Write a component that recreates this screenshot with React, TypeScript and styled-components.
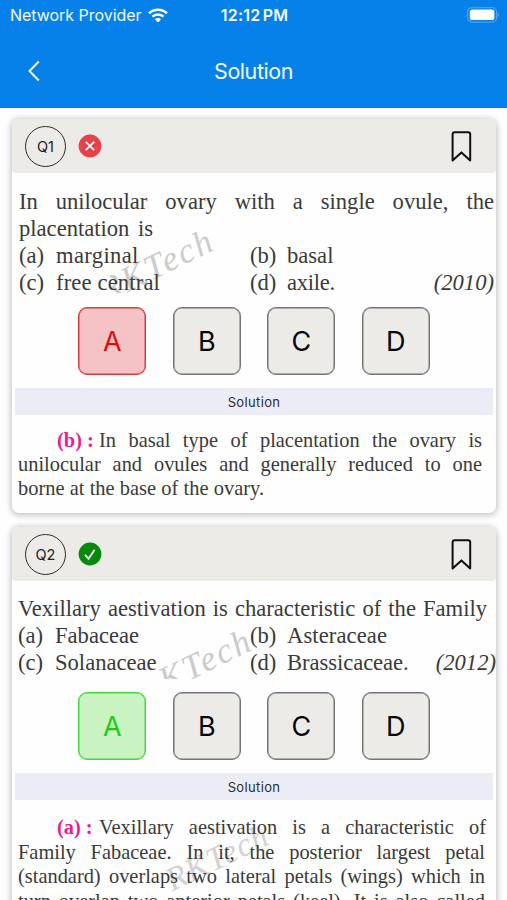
import React from "react";
import styled, { createGlobalStyle } from "styled-components";

const Global = createGlobalStyle`
  * { box-sizing: border-box; }
  html, body { margin: 0; padding: 0; height: 900px; overflow: hidden; background: #fff; }
  body { font-family: Inter, "Liberation Sans", sans-serif; }
  button { font: inherit; padding: 0; background: none; border: 0; }
`;

const Screen = styled.main`
  width: 507px;
  height: 900px;
  overflow: hidden;
  background: #fefefe;
`;

const TopBar = styled.header`
  height: 108px;
  background: #0581e9;
  color: #f2f9ff;
`;

const StatusBar = styled.div`
  height: 30px;
  padding: 0 8px 0 10px;
  display: grid;
  grid-template-columns: 1fr auto 1fr;
  align-items: center;
`;

const Carrier = styled.div`
  display: flex;
  align-items: center;
  gap: 6px;
  font-size: 16px;
  letter-spacing: -0.03px;
`;

const Clock = styled.div`
  font-size: 16px;
  font-weight: 600;
  letter-spacing: 0.2px;
  word-spacing: -2px;
`;

const Battery = styled.svg`
  justify-self: end;
`;

const NavBar = styled.nav`
  height: 78px;
  padding: 4px 24px 0 24px;
  display: grid;
  grid-template-columns: 20px 1fr 20px;
  align-items: center;
`;

const Title = styled.h1`
  margin: 0;
  text-align: center;
  font-size: 21.5px;
  font-weight: 400;
  line-height: 26px;
  letter-spacing: -0.45px;
`;

const BackButton = styled.button`
  display: flex;
  color: inherit;
`;

const CardList = styled.div`
  padding: 11px 11px 0 12px;
  display: flex;
  flex-direction: column;
  gap: 14px;
`;

const Card = styled.article<{ $height: number }>`
  flex: none;
  height: ${(p) => p.$height}px;
  border-radius: 7px;
  background: #fefefe;
  box-shadow: 0 1px 6px 1px rgba(0, 0, 0, 0.25);
`;

const CardHeader = styled.div`
  height: 54px;
  padding: 0 24px 0 13px;
  display: flex;
  align-items: center;
  border-radius: 7px 7px 4px 4px;
  background: #ecebe8;
`;

const QuestionNumber = styled.div`
  width: 41px;
  height: 41px;
  margin-right: 12px;
  display: flex;
  align-items: center;
  justify-content: center;
  border: 1.5px solid #2c2c2c;
  border-radius: 50%;
  font-size: 14.5px;
  color: #222;
`;

const BookmarkButton = styled.button`
  display: flex;
  margin-left: auto;
`;

const Prose = styled.div<{ $size: number; $leading: number; $pad: string }>`
  position: relative;
  padding: ${(p) => p.$pad};
  font-family: "Liberation Serif", serif;
  font-size: ${(p) => p.$size}px;
  line-height: ${(p) => p.$leading}px;
  color: #3a3a3a;
`;

const Line = styled.div<{ $width: number }>`
  position: relative;
  width: ${(p) => p.$width}px;
  white-space: nowrap;
  text-align: justify;
  text-align-last: justify;
`;

const AnswerLine = styled.div`
  position: relative;
  display: flex;
  padding-left: 39px;
`;

const Key = styled.b`
  width: 42px;
  flex: none;
  color: #ea1c96;
`;

const Choices = styled.div<{ $second: number }>`
  position: relative;
  display: grid;
  grid-template-columns: 37px ${(p) => p.$second}px 37px 1fr auto;
  white-space: nowrap;
`;

const Choice = styled.span<{ $spacing?: number }>`
  letter-spacing: ${(p) => p.$spacing ?? 0}px;
`;

const Year = styled.i`
  grid-column: 5;
`;

const WatermarkClip = styled.div<{ $x: number; $y: number; $w: number; $h: number }>`
  position: absolute;
  left: ${(p) => p.$x}px;
  top: ${(p) => p.$y}px;
  width: ${(p) => p.$w}px;
  height: ${(p) => p.$h}px;
  overflow: hidden;
`;

const WatermarkText = styled.span<{ $x: number; $y: number; $small?: boolean }>`
  position: absolute;
  left: ${(p) => p.$x}px;
  top: ${(p) => p.$y}px;
  transform: rotate(-26deg);
  transform-origin: 0 100%;
  font-size: ${(p) => (p.$small ? 33 : 35)}px;
  line-height: 1;
  font-style: italic;
  letter-spacing: ${(p) => (p.$small ? 1.2 : 2.3)}px;
  color: ${(p) => (p.$small ? "#d2d2d2" : "#cbcbcb")};
`;

const Options = styled.div<{ $top: number }>`
  margin-top: ${(p) => p.$top}px;
  display: flex;
  justify-content: center;
  gap: 26.5px;
`;

const tones = {
  plain: { bg: "#ecebe8", line: "#747474", text: "#060606" },
  wrong: { bg: "#f5c3c3", line: "#dc3b40", text: "#d90f12" },
  right: { bg: "#c9f4c1", line: "#4ad545", text: "#20ca17" },
};

type Tone = keyof typeof tones;

const Option = styled.button<{ $tone: Tone }>`
  width: 68px;
  height: 68px;
  padding-top: 2px;
  border: 1.5px solid ${(p) => tones[p.$tone].line};
  box-shadow: inset 0 0 0 0.5px ${(p) => tones[p.$tone].line};
  border-radius: 9px;
  background: ${(p) => tones[p.$tone].bg};
  color: ${(p) => tones[p.$tone].text};
  font-size: 27px;
  line-height: 64px;
`;

const SolutionBar = styled.div`
  height: 27px;
  margin: 13px 3px 0;
  background: #ebecf5;
  color: #2c2c30;
  font-size: 13px;
  line-height: 29px;
  letter-spacing: 0.35px;
  text-align: center;
`;

function WifiIcon() {
  return (
    <svg width="20" height="15" viewBox="0 0 20 15" fill="none" stroke="#fff">
      <path d="M1.1 5.2C6 0.6 14 0.6 18.9 5.2" strokeWidth="2.7" />
      <path d="M4.4 8.7C7.5 5.8 12.5 5.8 15.6 8.7" strokeWidth="2.5" />
      <path d="M10 14.4L6.9 11.3Q10 8.6 13.1 11.3Z" fill="#fff" stroke="none" />
    </svg>
  );
}

function BatteryIcon() {
  return (
    <Battery width="33" height="17" viewBox="0 0 33 17">
      <rect x="1.6" y="0.6" width="29" height="14.5" rx="4.5" fill="none" stroke="#4ba3f0" strokeWidth="1.2" />
      <rect x="3.8" y="2.5" width="24.6" height="10.6" rx="2.6" fill="#fff" />
      <path d="M31.6 5.4Q33 6 33 7.8T31.6 10.2Z" fill="#4ba3f0" />
    </Battery>
  );
}

function ResultIcon({ correct }: { correct: boolean }) {
  return (
    <svg width="24" height="24" viewBox="0 0 24 24" fill="none" stroke="#fff" strokeWidth="1.8">
      <circle cx="12" cy="12" r="11.4" fill={correct ? "#078a0b" : "#e5424b"} stroke="none" />
      {correct ? <path d="M7 12.8L10.6 16.8L16.6 7.8" /> : <path d="M7.8 7.8L16.2 16.2M16.2 7.8L7.8 16.2" />}
    </svg>
  );
}

function BookmarkIcon() {
  return (
    <svg width="21" height="32" viewBox="0 0 21 32" fill="none" stroke="#101010" strokeWidth="2">
      <path d="M1.6 30.6V4.3Q1.6 2.2 3.7 2.2H17.1Q19.2 2.2 19.2 4.3V30.6L10.4 22.4Z" strokeLinejoin="round" />
    </svg>
  );
}

interface QuestionProps {
  label: string;
  correct: boolean;
  height: number;
  optionsTop: number;
  question: React.ReactNode;
  solution: React.ReactNode;
}

function Question({ label, correct, height, optionsTop, question, solution }: QuestionProps) {
  return (
    <Card $height={height}>
      <CardHeader>
        <QuestionNumber>{label}</QuestionNumber>
        <ResultIcon correct={correct} />
        <BookmarkButton aria-label="Bookmark"><BookmarkIcon /></BookmarkButton>
      </CardHeader>
      {question}
      <Options $top={optionsTop}>
        {["A", "B", "C", "D"].map((letter, i) => (
          <Option key={letter} $tone={i > 0 ? "plain" : correct ? "right" : "wrong"}>{letter}</Option>
        ))}
      </Options>
      <SolutionBar>Solution</SolutionBar>
      {solution}
    </Card>
  );
}

export default function App() {
  return (
    <>
      <Global />
      <Screen>
        <TopBar>
          <StatusBar>
            <Carrier>Network Provider <WifiIcon /></Carrier>
            <Clock>12:12 PM</Clock>
            <BatteryIcon />
          </StatusBar>
          <NavBar>
            <BackButton aria-label="Back">
              <svg width="20" height="22" viewBox="0 0 20 22" fill="none" stroke="currentColor" strokeWidth="2">
                <path d="M14.8 1.5L5.5 11L14.8 20.5" />
              </svg>
            </BackButton>
            <Title>Solution</Title>
          </NavBar>
        </TopBar>
        <CardList>
          <Question
            label="Q1"
            correct={false}
            height={394}
            optionsTop={11}
            question={
              <Prose $size={22.6} $leading={27} $pad="15px 2px 0 7px">
                <WatermarkClip $x={98} $y={44} $w={120} $h={76}>
                  <WatermarkText $x={-1} $y={56}>RKTech</WatermarkText>
                </WatermarkClip>
                <Line $width={475}>In unilocular ovary with a single ovule, the</Line>
                <Line $width={134}>placentation is</Line>
                <Choices $second={194}>
                  <Choice>(a)</Choice><Choice $spacing={0.35}>marginal</Choice>
                  <Choice>(b)</Choice><Choice>basal</Choice>
                </Choices>
                <Choices $second={194}>
                  <Choice>(c)</Choice><Choice $spacing={0.15}>free central</Choice>
                  <Choice>(d)</Choice><Choice $spacing={-0.3}>axile.</Choice><Year>(2010)</Year>
                </Choices>
              </Prose>
            }
            solution={
              <Prose $size={20.4} $leading={24.2} $pad="13px 0 0 6px">
                <AnswerLine>
                  <Key>(b) :</Key>
                  <Line $width={383}>In basal type of placentation the ovary is</Line>
                </AnswerLine>
                <Line $width={464}>unilocular and ovules and generally reduced to one</Line>
                <Line $width={246}>borne at the base of the ovary.</Line>
              </Prose>
            }
          />
          <Question
            label="Q2"
            correct
            height={500}
            optionsTop={16}
            question={
              <Prose $size={22.6} $leading={27} $pad="14px 0 0 6px">
                <WatermarkClip $x={144} $y={38} $w={110} $h={60}>
                  <WatermarkText $x={-9} $y={54}>RKTech</WatermarkText>
                </WatermarkClip>
                <Line $width={469}>Vexillary aestivation is characteristic of the Family</Line>
                <Choices $second={195}>
                  <Choice>(a)</Choice><Choice>Fabaceae</Choice>
                  <Choice>(b)</Choice><Choice $spacing={0.1}>Asteraceae</Choice>
                </Choices>
                <Choices $second={195}>
                  <Choice>(c)</Choice><Choice>Solanaceae</Choice>
                  <Choice>(d)</Choice><Choice $spacing={-0.05}>Brassicaceae.</Choice><Year>(2012)</Year>
                </Choices>
              </Prose>
            }
            solution={
              <Prose $size={20.4} $leading={24.6} $pad="15px 0 0 6px">
                <WatermarkClip $x={145} $y={12} $w={124} $h={92}>
                  <WatermarkText $x={18} $y={52} $small>RKTech</WatermarkText>
                </WatermarkClip>
                <AnswerLine>
                  <Key>(a) :</Key>
                  <Line $width={387}>Vexillary aestivation is a characteristic of</Line>
                </AnswerLine>
                <Line $width={467}>Family Fabaceae. In it, the posterior largest petal</Line>
                <Line $width={467}>(standard) overlaps two lateral petals (wings) which in</Line>
                <Line $width={467}>turn overlap two anterior petals (keel). It is also called</Line>
              </Prose>
            }
          />
        </CardList>
      </Screen>
    </>
  );
}
